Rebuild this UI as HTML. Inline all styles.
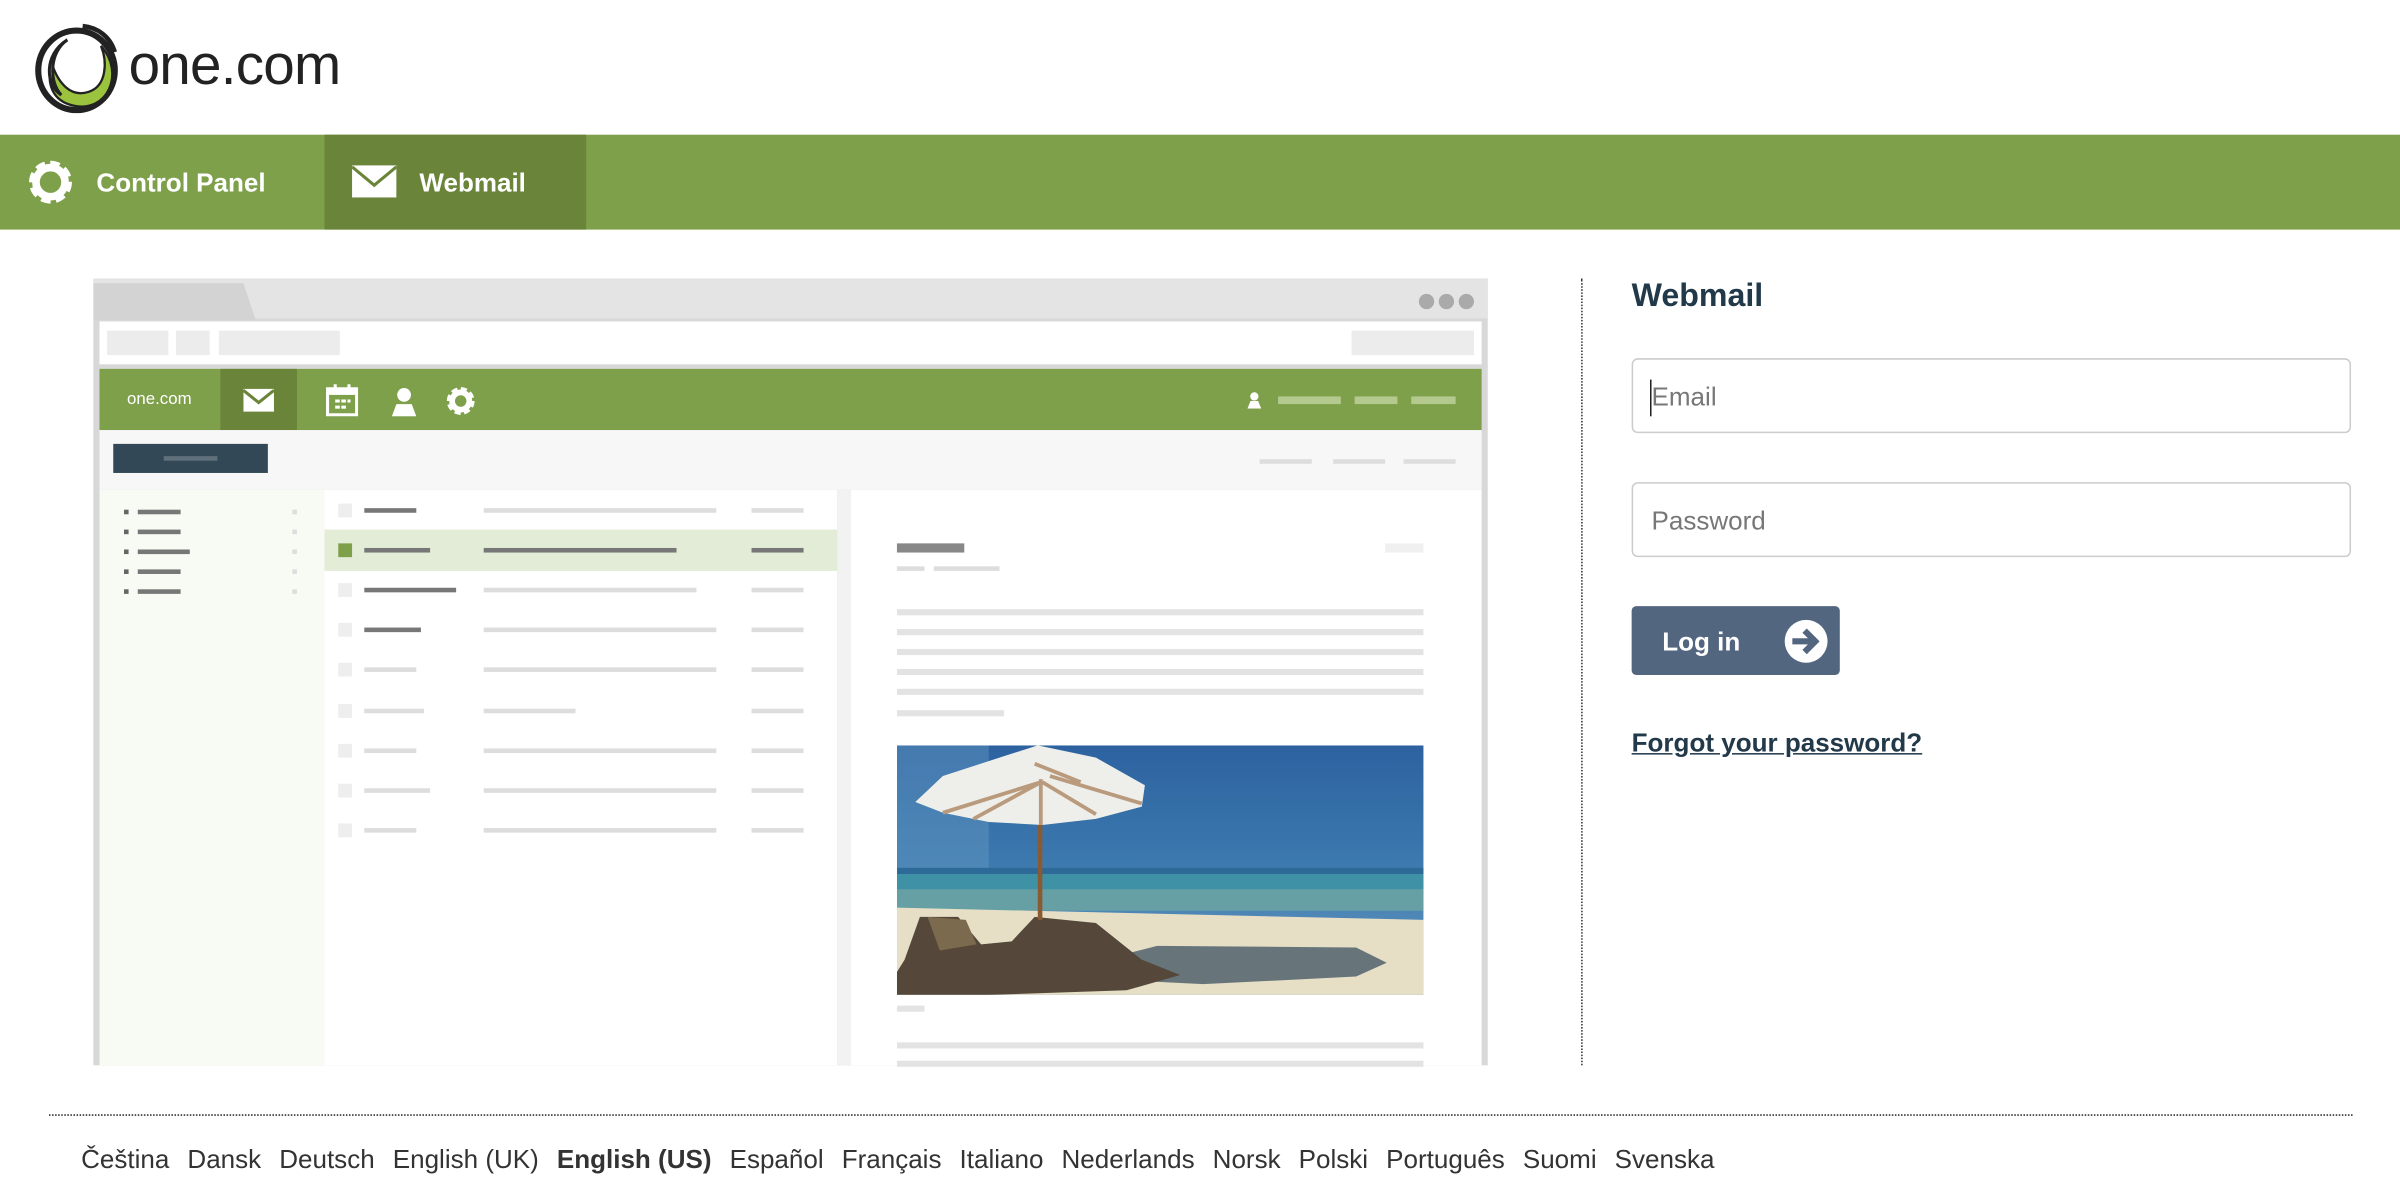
<!DOCTYPE html>
<html><head><meta charset="utf-8"><style>
html,body{margin:0;padding:0;background:#fff;width:2400px;height:1200px;overflow:hidden}
#w{position:absolute;left:0;top:0;width:1568px;height:784px;transform:scale(1.530612);transform-origin:0 0;font-family:"Liberation Sans",sans-serif}
.a{position:absolute}
.l{position:absolute;height:4px;background:#e3e3e3}
.f span{margin-right:11.8px}
</style></head><body><div id="w">
<!-- logo -->
<svg class="a" style="left:20px;top:14px" width="62" height="60" viewBox="0 0 62 60">
<ellipse cx="30" cy="32" rx="25" ry="26" fill="none" stroke="#222" stroke-width="4"/>
<path d="M46 16 C62 34 50 60 28 55 C14 52 10 40 14 28 C18 40 26 50 38 46 C50 42 50 26 46 16Z" fill="#9bc33d" stroke="#222" stroke-width="1.5"/>
<path d="M24 12 C12 20 12 40 20 48 C10 42 8 22 24 12Z" fill="#fff" stroke="#222" stroke-width="2"/>
<path d="M34 3 C44 4 52 10 55 20" fill="none" stroke="#222" stroke-width="3"/>
</svg>
<div class="a" style="left:84px;top:22px;font-size:37px;color:#222;letter-spacing:-0.5px">one.com</div>
<!-- nav -->
<div class="a" style="left:0;top:88px;width:1568px;height:62px;background:#7fa04b"></div>
<div class="a" style="left:212px;top:88px;width:171px;height:62px;background:#6a8539"></div>
<svg class="a" style="left:17px;top:103px" width="32" height="32" viewBox="0 0 32 32">
<circle cx="16" cy="16" r="11" fill="none" stroke="#fff" stroke-width="6" stroke-dasharray="5.5 3.1"/>
<circle cx="16" cy="16" r="9.5" fill="none" stroke="#fff" stroke-width="5"/>
</svg>
<div class="a" style="left:63px;top:110px;font-size:17px;font-weight:bold;color:#fff">Control Panel</div>
<svg class="a" style="left:230px;top:108px" width="29" height="21" viewBox="0 0 29 21"><rect width="29" height="21" fill="#fff"/><path d="M0 1 L14.5 13 L29 1" fill="none" stroke="#6a8539" stroke-width="2"/></svg>
<div class="a" style="left:274px;top:110px;font-size:17px;font-weight:bold;color:#fff">Webmail</div>
<!-- mockup -->
<div class="a" style="left:61px;top:182px;width:911px;height:514px;background:#d8d8d8"></div>
<div class="a" style="left:61px;top:182px;width:911px;height:26px;background:#e4e4e4"></div>
<svg class="a" style="left:61px;top:182px" width="110" height="27"><path d="M0 3 L98 3 L106 27 L0 27Z" fill="#d3d3d3"/></svg>
<div class="a" style="left:927px;top:192px;width:10px;height:10px;border-radius:5px;background:#aaa"></div>
<div class="a" style="left:940px;top:192px;width:10px;height:10px;border-radius:5px;background:#aaa"></div>
<div class="a" style="left:953px;top:192px;width:10px;height:10px;border-radius:5px;background:#aaa"></div>
<div class="a" style="left:65px;top:210px;width:903px;height:28px;background:#fff"></div>
<div class="a" style="left:70px;top:216px;width:40px;height:16px;background:#ececec"></div>
<div class="a" style="left:115px;top:216px;width:22px;height:16px;background:#ececec"></div>
<div class="a" style="left:143px;top:216px;width:79px;height:16px;background:#ececec"></div>
<div class="a" style="left:883px;top:216px;width:80px;height:16px;background:#ececec"></div>
<div class="a" style="left:65px;top:241px;width:903px;height:40px;background:#7fa04b"></div>
<div class="a" style="left:83px;top:255px;font-size:11px;color:#fff">one.com</div>
<div class="a" style="left:144px;top:241px;width:50px;height:40px;background:#6a8539"></div>
<svg class="a" style="left:159px;top:254px" width="20" height="15"><rect width="20" height="15" fill="#fff"/><path d="M0 1 L10 9 L20 1" fill="none" stroke="#6a8539" stroke-width="2"/></svg>
<svg class="a" style="left:213px;top:251px" width="21" height="21"><rect x="1" y="3" width="19" height="17" fill="none" stroke="#fff" stroke-width="2"/><rect x="1" y="3" width="19" height="4" fill="#fff"/><rect x="5" y="0" width="2" height="4" fill="#fff"/><rect x="14" y="0" width="2" height="4" fill="#fff"/><rect x="6" y="10" width="3" height="2" fill="#fff"/><rect x="10" y="10" width="3" height="2" fill="#fff"/><rect x="14" y="10" width="2" height="2" fill="#fff"/><rect x="6" y="14" width="3" height="2" fill="#fff"/><rect x="10" y="14" width="3" height="2" fill="#fff"/></svg>
<svg class="a" style="left:256px;top:253px" width="16" height="19"><circle cx="8" cy="5" r="4.5" fill="#fff"/><path d="M0 19 L3 11 L13 11 L16 19Z" fill="#fff"/></svg>
<svg class="a" style="left:291px;top:252px" width="20" height="20" viewBox="0 0 32 32"><circle cx="16" cy="16" r="11" fill="none" stroke="#fff" stroke-width="7" stroke-dasharray="5.5 3.1"/><circle cx="16" cy="16" r="9" fill="none" stroke="#fff" stroke-width="6"/></svg>
<svg class="a" style="left:815px;top:256px" width="9" height="11"><circle cx="4.5" cy="3" r="2.7" fill="#fff"/><path d="M0 11 L2 6 L7 6 L9 11Z" fill="#fff"/></svg>
<div class="a" style="left:835px;top:259px;width:41px;height:5px;background:#b3c98e"></div>
<div class="a" style="left:885px;top:259px;width:28px;height:5px;background:#b3c98e"></div>
<div class="a" style="left:922px;top:259px;width:29px;height:5px;background:#b3c98e"></div>
<div class="a" style="left:65px;top:281px;width:903px;height:39px;background:#f7f7f7"></div>
<div class="a" style="left:74px;top:290px;width:101px;height:19px;background:#324856"></div>
<div class="a" style="left:107px;top:298px;width:35px;height:3px;background:#5f707b"></div>
<div class="a" style="left:823px;top:300px;width:34px;height:3px;background:#ddd"></div>
<div class="a" style="left:871px;top:300px;width:34px;height:3px;background:#ddd"></div>
<div class="a" style="left:917px;top:300px;width:34px;height:3px;background:#ddd"></div>
<div class="a" style="left:65px;top:320px;width:147px;height:376px;background:#f8faf4"></div>
<div class="a" style="left:212px;top:320px;width:335px;height:376px;background:#fff"></div>
<div class="a" style="left:547px;top:320px;width:9px;height:376px;background:#f2f2f2"></div>
<div class="a" style="left:556px;top:320px;width:412px;height:376px;background:#fff"></div>
<div class="a" style="left:212px;top:346px;width:335px;height:27px;background:#e3ecd6"></div>
<div id="rows"></div>
<!-- reading pane -->
<div class="a" style="left:586px;top:355px;width:44px;height:6px;background:#888"></div>
<div class="a" style="left:586px;top:370px;width:18px;height:3px;background:#ddd"></div>
<div class="a" style="left:610px;top:370px;width:43px;height:3px;background:#ddd"></div>
<div class="a" style="left:905px;top:355px;width:25px;height:6px;background:#f0f0f0"></div>
<div class="l" style="left:586px;top:398px;width:344px"></div>
<div class="l" style="left:586px;top:411px;width:344px"></div>
<div class="l" style="left:586px;top:424px;width:344px"></div>
<div class="l" style="left:586px;top:437px;width:344px"></div>
<div class="l" style="left:586px;top:450px;width:344px"></div>
<div class="l" style="left:586px;top:464px;width:70px"></div>
<svg class="a" style="left:586px;top:487px" width="344" height="163" viewBox="0 0 344 163">
<defs><linearGradient id="sk" x1="0" y1="0" x2="0" y2="1"><stop offset="0" stop-color="#2d62a0"/><stop offset="0.45" stop-color="#3b78ad"/><stop offset="1" stop-color="#6899c2"/></linearGradient></defs>
<rect width="344" height="163" fill="url(#sk)"/>
<rect y="0" width="60" height="80" fill="#6a9ec6" opacity="0.4"/>
<rect y="80" width="344" height="4" fill="#2d6a98"/>
<rect y="84" width="344" height="12" fill="#3f92a6"/>
<rect y="94" width="344" height="14" fill="#67a0a4"/>
<path d="M0 106 L344 114 L344 163 L0 163Z" fill="#e6dfc6"/>
<path d="M150 136 L170 131 L300 132 L320 142 L300 151 L200 156 L160 154Z" fill="#67757a"/>
<path d="M0 148 L5 140 L15 112 L40 112 L55 130 L75 128 L90 112 L130 116 L160 140 L185 150 L150 160 L60 163 L0 163Z" fill="#55483a"/>
<path d="M20 112 L45 114 L52 130 L28 134Z" fill="#7b6a4e"/>
<rect x="92" y="40" width="3" height="74" fill="#8a5a33"/>
<path d="M12 37 L30 20 L70 7 L92 0 L130 8 L162 26 L160 40 L130 48 L95 52 L60 50 L30 44Z" fill="#eeeeea"/>
<path d="M30 44 L94 24 M50 48 L94 24 M94 52 L94 22 M130 45 L95 24 M160 38 L100 20 M90 12 L120 24" stroke="#b99a7c" stroke-width="2.5" fill="none"/>
</svg>
<div class="a" style="left:586px;top:657px;width:18px;height:4px;background:#e3e3e3"></div>
<div class="l" style="left:586px;top:681px;width:344px"></div>
<div class="l" style="left:586px;top:693px;width:344px"></div>
<!-- divider -->
<div class="a" style="left:1033px;top:182px;height:514px;border-left:1px dotted #333"></div>
<!-- form -->
<div class="a" style="left:1066px;top:182px;font-size:21px;font-weight:bold;color:#22394a">Webmail</div>
<div class="a" style="left:1066px;top:234px;width:468px;height:47px;border:1.5px solid #ccc;border-radius:4px"></div>
<div class="a" style="left:1079px;top:250px;font-size:17px;color:#777">Email</div>
<div class="a" style="left:1078px;top:248px;width:1px;height:24px;background:#222"></div>
<div class="a" style="left:1066px;top:315px;width:468px;height:47px;border:1.5px solid #ccc;border-radius:4px"></div>
<div class="a" style="left:1079px;top:331px;font-size:17px;color:#777">Password</div>
<div class="a" style="left:1066px;top:396px;width:136px;height:45px;background:#536680;border-radius:3px"></div>
<div class="a" style="left:1086px;top:410px;font-size:17px;font-weight:bold;color:#fff">Log in</div>
<svg class="a" style="left:1165px;top:404px" width="30" height="30" viewBox="0 0 30 30"><circle cx="15" cy="15" r="14" fill="#fff"/><path d="M6 15 H20 M14 8 L21 15 L14 22" stroke="#536680" stroke-width="4" fill="none"/></svg>
<div class="a" style="left:1066px;top:476px;font-size:17px;font-weight:bold;color:#22394a;text-decoration:underline">Forgot your password?</div>
<!-- footer -->
<div class="a" style="left:32px;top:728px;width:1505px;border-top:1px dotted #333"></div>
<div class="a f" style="left:53px;top:748px;font-size:17px;color:#333;white-space:nowrap"><span>Čeština</span><span>Dansk</span><span>Deutsch</span><span>English (UK)</span><span><b>English (US)</b></span><span>Español</span><span>Français</span><span>Italiano</span><span>Nederlands</span><span>Norsk</span><span>Polski</span><span>Português</span><span>Suomi</span><span>Svenska</span></div>
</div>
<script>
var s='';
[334,347,360,373,386].forEach(function(y){s+='<div class="a" style="left:81px;top:'+(y-1)+'px;width:3px;height:3px;background:#666"></div><div class="a" style="left:90px;top:'+(y-1)+'px;width:'+(y==360?34:28)+'px;height:3px;background:#777"></div><div class="a" style="left:191px;top:'+(y-1)+'px;width:3px;height:3px;background:#ddd"></div>';});
var ys=[333,359,385,411,437,464,490,516,542],w1=[34,43,60,37,34,39,34,43,34],w2=[152,126,139,152,152,60,152,152,152];
ys.forEach(function(y,i){var dk=i<4;s+='<div class="a" style="left:221px;top:'+(y-4)+'px;width:9px;height:9px;background:'+(i==1?'#7fa04b':'#eee')+'"></div><div class="a" style="left:238px;top:'+(y-1)+'px;width:'+w1[i]+'px;height:3px;background:'+(dk?'#777':'#ddd')+'"></div><div class="a" style="left:316px;top:'+(y-1)+'px;width:'+w2[i]+'px;height:3px;background:'+(i==1?'#777':'#ddd')+'"></div><div class="a" style="left:491px;top:'+(y-1)+'px;width:34px;height:3px;background:'+(i==1?'#777':'#ddd')+'"></div>';});
document.getElementById('rows').outerHTML=s;
</script>
</body></html>
